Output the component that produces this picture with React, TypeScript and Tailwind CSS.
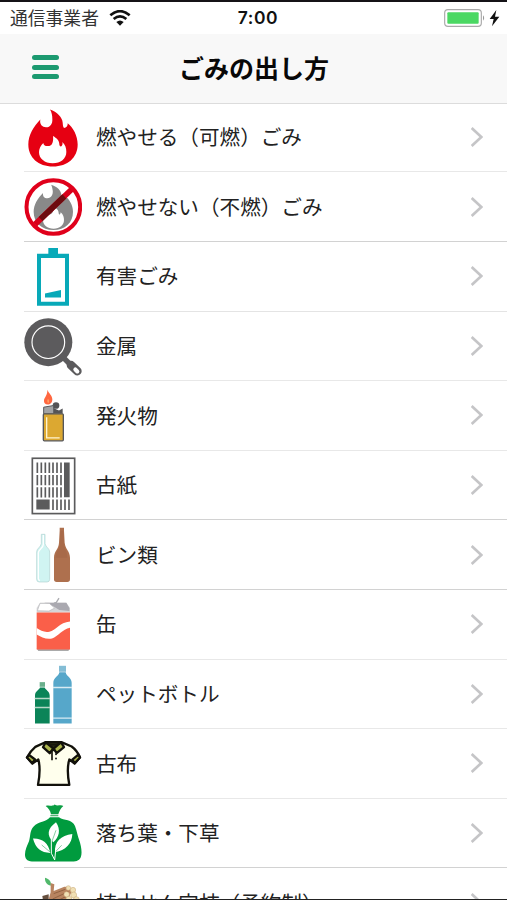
import type { ReactNode } from "react";

const Icon = ({ top, children }: { top: number; children: ReactNode }) => (
  <svg viewBox={`27 ${top} 174 208.8`} className="h-[69.6px] w-[58px] shrink-0" fill="none">
    {children}
  </svg>
);

const BurnableIcon = () => (
  <Icon top={7.2}>
    <path
      fill="#e60012"
      d="M105 27C126 34 142 51 143 66C144 73 143 78 147 82C154 81 159 76 158 68C174 80 188 105 188 132C188 171 158 198 114 198C70 198 40 171 40 132C40 103 56 78 76 57C73 72 82 80 93 80C107 80 113 68 112 55C112 45 110 35 105 27Z"
    />
    <path
      fill="#fff"
      d="M114 106C125 113 133 118 133 132C134 138 138 140 141 135C143 132 143 128 142 124C151 132 154 143 154 154C154 174 137 188 113 188C89 188 72 174 72 155C72 144 77 135 85 127C85 134 92 138 103 136C112 134 116 122 114 106Z"
    />
  </Icon>
);

const NonBurnableIcon = () => (
  <Icon top={216}>
    <path
      fill="#898989"
      d="M108 254C126 259 139 271 139 285C139 294 143 297 151 289C162 297 174 315 174 335C174 368 150 390 115 390C80 390 56 368 56 336C56 313 69 294 84 279C83 289 88 295 97 295C109 295 115 283 113 271C112 264 111 258 108 254Z"
    />
    <path
      fill="#fff"
      d="M115 319C124 325 131 330 131 340C132 346 136 345 137 337C145 344 147 352 147 360C147 376 134 386 116 386C97 386 84 376 84 360C84 351 88 344 94 339C97 345 106 345 111 340C116 335 117 326 115 319Z"
    />
    <path d="M60 373L171 267" stroke="#d7001a" strokeWidth="17" />
    <path d="M77 357L148 289" stroke="#6d0c10" strokeWidth="17" />
    <circle cx="115" cy="321" r="80.5" stroke="#e0001b" strokeWidth="12" />
  </Icon>
);

const BatteryIcon = () => (
  <Icon top={4.8}>
    <path fill="#08a9b8" fillRule="evenodd" d="M100 23H129V40H162V196H66V40H100ZM78 53V184H150V53Z" />
    <path fill="#08a9b8" d="M90 159L138 149V171H90Z" />
  </Icon>
);

const PanIcon = () => (
  <Icon top={213.6}>
    <path d="M146 351L185 390" stroke="#5c5b5d" strokeWidth="16" />
    <path d="M168 373L187 391" stroke="#5c5b5d" strokeWidth="26" strokeLinecap="round" />
    <path d="M181 386L187 392" stroke="#fff" strokeWidth="12" strokeLinecap="round" />
    <circle cx="100" cy="304" r="72" fill="#5c5b5d" />
    <circle cx="100" cy="304" r="49" stroke="#fff" strokeWidth="3.5" />
  </Icon>
);

const LighterIcon = () => (
  <Icon top={2.4}>
    <path fill="#ff6740" d="M97 29C101 40 112 46 112 58C112 67 106 73 98 73C90 73 86 67 87 60C88 53 98 45 97 29Z" />
    <path fill="#ffb36a" d="M99 56C102 61 102 65 100 69C96 66 97 61 99 56Z" />
    <circle cx="123" cy="76" r="10" fill="#545456" />
    <path fill="#545456" d="M116 84L132 91L143 85V101H116Z" />
    <path fill="#a2a3a5" stroke="#55565a" strokeWidth="3" d="M86 81L116 76V101H86Z" />
    <rect x="85" y="101" width="60" height="81" rx="3" fill="#dca831" stroke="#55565a" strokeWidth="4" />
    <path d="M95 111V173H134" stroke="#fff4cf" strokeWidth="4" />
  </Icon>
);

const NewspaperIcon = () => (
  <Icon top={211.2}>
    <rect x="52" y="233" width="127" height="166" fill="#fff" stroke="#5b5b5c" strokeWidth="5" />
    <g stroke="#5b5b5c" strokeWidth="5">
      {[246, 283, 320].map((y) => (
        <path
          key={y}
          d={`M67 ${y}v31M79 ${y}v31M91 ${y}v31M103 ${y}v31M114 ${y}v31M126 ${y}v31M138 ${y}v31`}
        />
      ))}
      <path d="M114 357v31M126 357v31M138 357v31M150 357v31M162 357v31" />
    </g>
    <path fill="#5b5b5c" d="M147 246H164V350H147ZM64 357H104V387H64Z" />
  </Icon>
);

const BottlesIcon = () => (
  <Icon top={0}>
    <path
      fill="#d0f4f2"
      stroke="#b1d2d0"
      strokeWidth="2"
      d="M79 43H90V71C92 82 104 85 104 96V178Q104 186 96 186H73Q65 186 65 178V96C65 85 77 82 79 71Z"
    />
    <path d="M85 45V73C84 87 70 87 70 99V176Q70 181 75 181" stroke="#fff" strokeWidth="4" />
    <path
      fill="#ae704e"
      d="M134 23H147V32L149 68C151 88 165 93 165 113V178Q165 186 157 186H125Q117 186 117 178V113C117 93 131 88 132 68L134 32Z"
    />
    <path fill="#a86a49" d="M136 32H145L147 69C148 89 156 91 157 113H122C123 91 134 88 135 69Z" />
  </Icon>
);

const CanIcon = () => (
  <Icon top={208.8}>
    <path fill="#d5d5d8" d="M75 247H154L165 263V276H65V263Z" />
    <path fill="#aaa9b0" d="M88 247H154L163 263V272L133 269L116 258Z" />
    <path d="M75 249L67 271L102 272L119 263L103 249Z" fill="#fff" stroke="#b8b8bb" strokeWidth="2" />
    <path d="M117 248L124 246L132 233" stroke="#acacb1" strokeWidth="4" />
    <path fill="#aaa" d="M65 384H165L160 392H70Z" />
    <path fill="#fa5f49" d="M65 276H165V387H65Z" />
    <path
      fill="#fff"
      d="M65 323C77 330 87 337 103 334C123 330 133 306 165 303V322C142 326 130 348 111 354C94 358 78 349 65 342Z"
    />
  </Icon>
);

const PetBottleIcon = () => (
  <Icon top={-2.4}>
    <path fill="#6aaf8c" d="M74 64H90V78H74Z" />
    <path fill="#0b8458" d="M75 80H89C92 88 104 91 104 104V188H60V104C60 91 72 88 75 80Z" />
    <path d="M59 113H105M59 140H105" stroke="#b6d8c7" strokeWidth="4" />
    <path fill="#84bdd5" d="M132 15H153V33H132Z" />
    <path fill="#56a7ca" d="M133 34H152C154 47 170 49 170 66V188H115V66C115 49 131 47 133 34Z" />
    <path d="M114 80H171M114 172H171" stroke="#d8ebf3" strokeWidth="4" />
  </Icon>
);

const ShirtIcon = () => (
  <Icon top={206.4}>
    <g stroke="#12110b" strokeWidth="7" strokeLinejoin="round">
      <path
        fill="#ffffed"
        d="M91 246L61 260C50 269 42 281 36 292L52 310L70 298C77 324 74 348 69 374H163C158 348 155 324 163 298L179 310L195 291C189 278 181 267 170 259L139 246Z"
      />
      <path fill="#adb64e" d="M42 284L60 298L52 309L36 292ZM190 283L172 298L179 309L195 292Z" />
      <path fill="#292b13" d="M92 246H138L117 270Z" />
      <path fill="#adb64e" d="M92 246L84 261L104 279L115 265ZM138 246L147 261L125 279L116 265Z" />
    </g>
    <path d="M111 268V300M95 251Q116 257 136 250" stroke="#17160d" strokeWidth="5" />
    <circle cx="123" cy="282" r="3" fill="#222" />
    <circle cx="123" cy="295" r="3" fill="#222" />
  </Icon>
);

const LeavesIcon = () => (
  <Icon top={10.2}>
    <path fill="#0b9e43" d="M92 31C103 26 111 35 119 27C127 33 137 26 145 31C137 38 133 46 130 56H108C106 45 101 38 92 31Z" />
    <path d="M106 60H130" stroke="#54b574" strokeWidth="4" />
    <path
      fill="#009b3e"
      d="M105 65H132C147 76 171 70 180 91C186 106 187 119 193 135C198 149 202 170 198 183C195 194 186 198 171 198H57C40 198 31 193 30 179C29 164 37 149 42 137C47 121 44 105 56 93C70 77 94 80 105 65Z"
    />
    <path
      fill="#fff"
      d="M123 80C138 103 133 124 115 140C94 119 97 99 123 80ZM54 129C82 128 100 142 106 172C78 172 61 157 54 129ZM172 115C171 144 152 164 120 170C118 139 137 119 172 115Z"
    />
    <path d="M123 104L111 137M120 170L140 149M80 148L106 170" stroke="#0b9b43" strokeWidth="1.5" />
    <path d="M109 132V173L119 193L122 165" stroke="#fff" strokeWidth="3" />
  </Icon>
);

const BranchesIcon = () => (
  <Icon top={219}>
    <path fill="#50b86b" d="M90 248C103 251 110 261 107 272C96 269 89 261 90 248Z" />
    <path fill="#67503f" d="M82 303L101 298V330H86Z" />
    <path
      fill="#b98460"
      d="M107 264L118 268L116 288L148 275L162 276L170 291L150 330H96L107 292Z"
    />
    <path d="M116 296L151 283M113 312L160 290M130 316L162 300" stroke="#8a5b3b" strokeWidth="2.5" />
    <g fill="#f0e0b5" stroke="#c9a777" strokeWidth="1.5">
      <circle cx="160" cy="279" r="7" />
      <circle cx="174" cy="285" r="8" />
      <circle cx="155" cy="298" r="8" />
      <circle cx="176" cy="300" r="9" />
      <circle cx="162" cy="313" r="9" />
      <circle cx="184" cy="314" r="9" />
    </g>
  </Icon>
);

const items = [
  { icon: BurnableIcon, label: "燃やせる（可燃）ごみ", line: "border-[#e8e8e8]" },
  { icon: NonBurnableIcon, label: "燃やせない（不燃）ごみ", line: "border-[#d2d2d2]" },
  { icon: BatteryIcon, label: "有害ごみ", line: "border-[#e4e4e4]" },
  { icon: PanIcon, label: "金属", line: "border-[#e8e8e8]" },
  { icon: LighterIcon, label: "発火物", line: "border-[#e8e8e8]" },
  { icon: NewspaperIcon, label: "古紙", line: "border-[#d2d2d2]" },
  { icon: BottlesIcon, label: "ビン類", line: "border-[#d2d2d2]" },
  { icon: CanIcon, label: "缶", line: "border-[#e8e8e8]" },
  { icon: PetBottleIcon, label: "ペットボトル", line: "border-[#e8e8e8]" },
  { icon: ShirtIcon, label: "古布", line: "border-[#e8e8e8]" },
  { icon: LeavesIcon, label: "落ち葉・下草", line: "border-[#d2d2d2]" },
  { icon: BranchesIcon, label: "植木せん定枝（予約制）", line: "border-[#e8e8e8]" },
];

const StatusBar = () => (
  <div className="grid h-8 grid-cols-3 items-center bg-white px-2.5">
    <div className="flex items-center gap-2.5">
      <span className="whitespace-nowrap text-[17.8px] leading-none text-[#333]">通信事業者</span>
      <svg viewBox="0 0 66 48" className="h-4 w-[22px] shrink-0" fill="none">
        <path d="M4 16Q33 -9 62 16M14 27Q33 11 52 27" stroke="#111" strokeWidth="8" />
        <path fill="#111" d="M22 36Q33 27 44 36L33 47Z" />
      </svg>
    </div>
    <span className="pl-[9px] text-center font-['Inter'] text-[17.5px] font-semibold leading-none tracking-[0.6px] text-[#111]">
      7:00
    </span>
    <div className="flex items-center justify-end">
      <svg viewBox="0 0 168 54" className="-mr-[3px] h-[18px] w-14" fill="none">
        <rect x="2" y="2" width="110" height="50" rx="10" stroke="#aaa" strokeWidth="3.5" />
        <rect x="10" y="10" width="94" height="34" rx="3" fill="#4bd863" />
        <path fill="#999" d="M117 19Q124 27 117 35Z" />
        <path fill="#111" d="M157 3L137 30H149L144 52L166 23H153Z" />
      </svg>
    </div>
  </div>
);

export default function App() {
  return (
    <div className="flex h-[900px] w-[507px] flex-col overflow-hidden border-b border-[#222] bg-white font-['Noto_Sans_CJK_JP',sans-serif]">
      <header className="h-[103.8px] shrink-0 border-b border-b-[#dcdcdc] border-t-2 border-t-[#151317] bg-[#f8f8f8]">
        <StatusBar />
        <div className="grid h-[66px] grid-cols-[90px_1fr_90px] items-center">
          <button aria-label="メニュー" className="ml-8 flex w-[27px] flex-col gap-[4.5px]">
            <span className="h-[5px] rounded-full bg-[#1c9a70]" />
            <span className="h-[5px] rounded-full bg-[#1c9a70]" />
            <span className="h-[5px] rounded-full bg-[#1c9a70]" />
          </button>
          <h1 className="pl-px text-center text-[25px] font-bold leading-none text-[#080808]">ごみの出し方</h1>
        </div>
      </header>
      <ul className="-mt-px">
        {items.map((item) => (
          <li key={item.label} className={`ml-6 flex h-[69.6px] items-start border-b ${item.line}`}>
            <item.icon />
            <span className="ml-3.5 flex-1 self-center pb-px text-[20.6px] leading-none text-[#222]">
              {item.label}
            </span>
            <svg viewBox="0 0 36 60" className="mr-6 h-5 w-3 self-center" fill="none">
              <path d="M2 3L31 30L2 57" stroke="#c5c5c7" strokeWidth="8" />
            </svg>
          </li>
        ))}
      </ul>
    </div>
  );
}
